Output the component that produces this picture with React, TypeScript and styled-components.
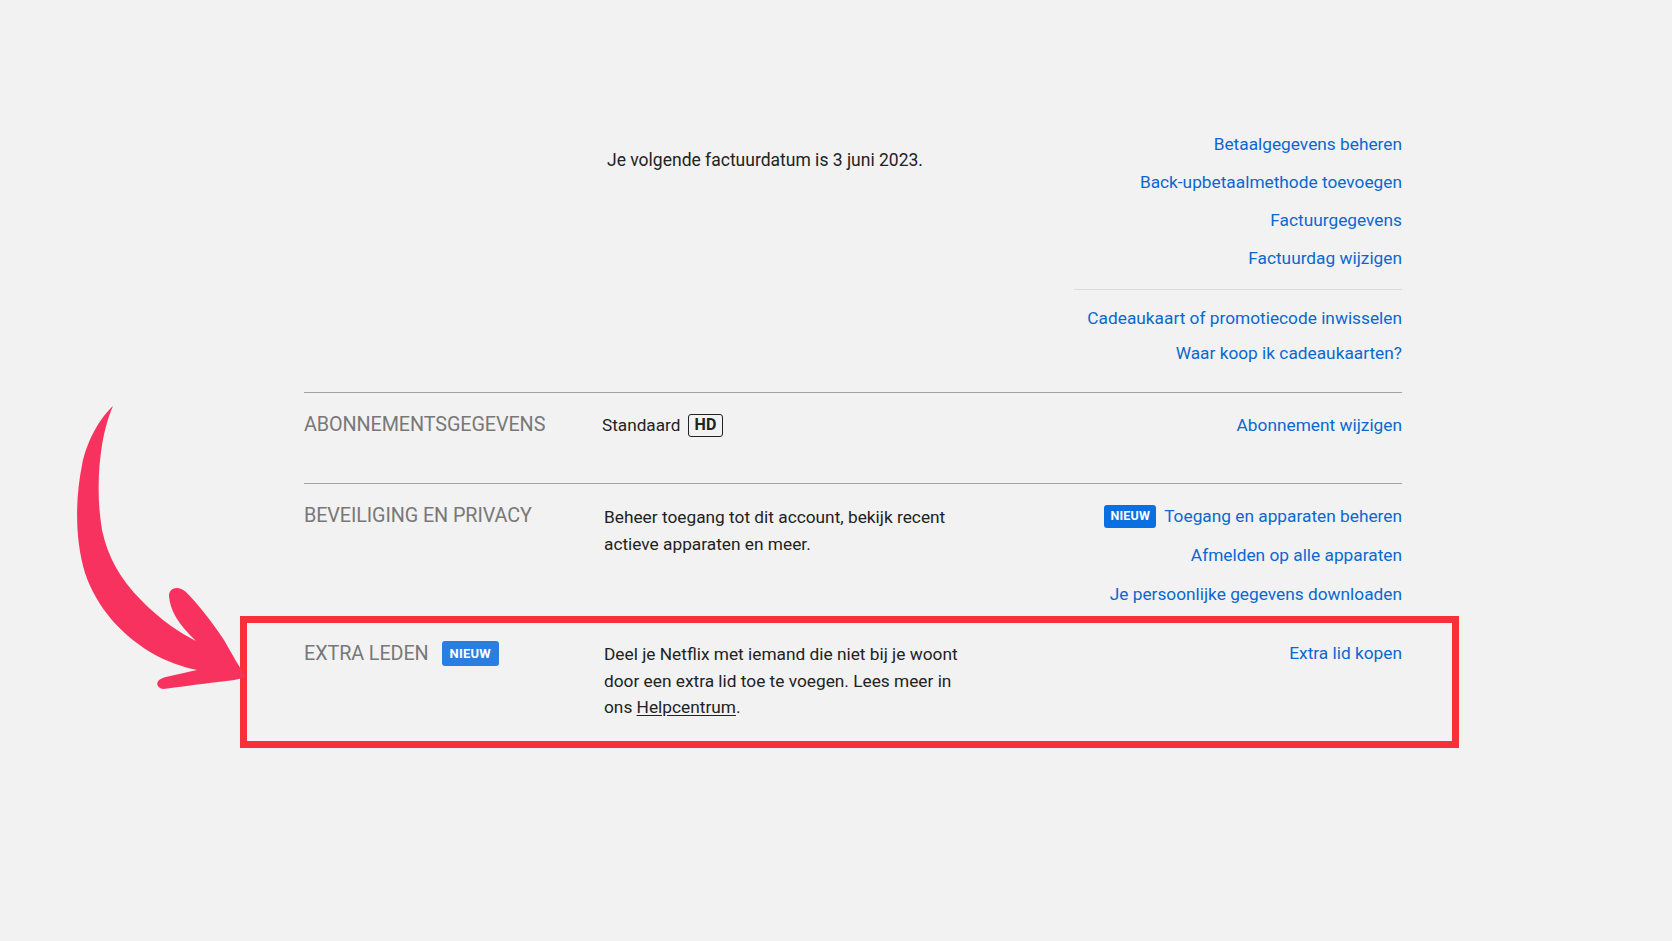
import React from 'react';
import styled, { createGlobalStyle } from 'styled-components';

const GlobalStyle = createGlobalStyle`
    html, body {
        margin: 0;
        padding: 0;
        background: #f2f2f2;
    }
    body {
        font-family: Roboto, "Liberation Sans", Arial, sans-serif;
        color: #222;
    }
`

const Page = styled.div`
    position: relative;
    width: 1672px;
    height: 941px;
    overflow: hidden;
    background: #f2f2f2;
`

const Content = styled.main`
    width: 1098px;
    margin-left: 304px;
    padding-top: 112px;
`

interface RowProps {
    $pb: number;
    $border?: boolean;
}

const Row = styled.section<RowProps>`
    position: relative;
    display: grid;
    grid-template-columns: 298px 1fr 328px;
    align-items: start;
    padding: 20px 0 ${({$pb}) => $pb}px;
    border-bottom: ${({$border}) => $border ? '1px solid #a3a3a3' : 'none'};
`

const Highlighted = styled(Row)`
    padding-top: 21px;

    &::after {
        content: '';
        position: absolute;
        top: -4px;
        left: -64px;
        right: -57px;
        height: 132px;
        box-sizing: border-box;
        border: 7px solid #f8303a;
        pointer-events: none;
    }
`

const Label = styled.h2`
    margin: 0;
    display: flex;
    align-items: center;
    gap: 13px;
    font-size: 19.8px;
    font-weight: 400;
    line-height: 24px;
    color: #787878;
    text-transform: uppercase;
    letter-spacing: -0.1px;
`

const Middle = styled.div<{ $pt?: number; $pl?: number }>`
    padding: ${({$pt}) => $pt || 0}px 0 0 ${({$pl}) => $pl || 0}px;
    font-size: 17.5px;
    line-height: 24px;
    color: #222;
`

const Description = styled.p`
    margin: 0 0 0 2px;
    max-width: 365px;
    font-size: 17.3px;
    line-height: 26.5px;
    color: #222;
`

const HelpLink = styled.a`
    color: #222;
    text-decoration: underline;
    text-underline-offset: 2px;
`

const Plan = styled.div`
    display: flex;
    align-items: center;
    gap: 8px;
    font-size: 17.2px;
    line-height: 24px;
`

const HdBadge = styled.span`
    display: inline-flex;
    align-items: center;
    justify-content: center;
    box-sizing: border-box;
    height: 23px;
    padding: 0 5px;
    border: 1.5px solid #222;
    border-radius: 3px;
    font-size: 16px;
    font-weight: 700;
    letter-spacing: 0.3px;
`

const Links = styled.div`
    display: flex;
    flex-direction: column;
    align-items: flex-end;
`

const LinkGroup = styled.div<{ $gap: number }>`
    display: flex;
    flex-direction: column;
    align-items: flex-end;
    gap: ${({$gap}) => $gap}px;
`

const Divider = styled.hr`
    align-self: stretch;
    margin: 19px 0 16px;
    border: none;
    border-top: 1px solid #dcdcdc;
`

const ActionLink = styled.a`
    display: flex;
    align-items: center;
    gap: 8px;
    font-size: 17.3px;
    line-height: 24px;
    color: #0b68d0;
    text-decoration: none;
    white-space: nowrap;
`

const NewBadge = styled.span<{ $large?: boolean }>`
    display: inline-flex;
    align-items: center;
    height: ${({$large}) => $large ? 25 : 23}px;
    padding: 0 ${({$large}) => $large ? 8 : 6}px;
    border-radius: 3px;
    background: ${({$large}) => $large ? '#2a7ee2' : '#0a6fe0'};
    color: #fff;
    font-size: ${({$large}) => $large ? 13 : 12.5}px;
    font-weight: 700;
    letter-spacing: 0.2px;
`

const Arrow = styled.svg`
    position: absolute;
    left: 50px;
    top: 390px;
    width: 220px;
    height: 320px;
    pointer-events: none;
`

const App = () => {
    return (
        <Page>
            <GlobalStyle />
            <Content>
                <Row $pb={27} $border>
                    <div />
                    <Middle $pt={16} $pl={5}>Je volgende factuurdatum is 3 juni 2023.</Middle>
                    <Links>
                        <LinkGroup $gap={14}>
                            <ActionLink href="#">Betaalgegevens beheren</ActionLink>
                            <ActionLink href="#">Back-upbetaalmethode toevoegen</ActionLink>
                            <ActionLink href="#">Factuurgegevens</ActionLink>
                            <ActionLink href="#">Factuurdag wijzigen</ActionLink>
                        </LinkGroup>
                        <Divider />
                        <LinkGroup $gap={11}>
                            <ActionLink href="#">Cadeaukaart of promotiecode inwisselen</ActionLink>
                            <ActionLink href="#">Waar koop ik cadeaukaarten?</ActionLink>
                        </LinkGroup>
                    </Links>
                </Row>

                <Row $pb={46} $border>
                    <Label>Abonnementsgegevens</Label>
                    <Plan>
                        Standaard <HdBadge>HD</HdBadge>
                    </Plan>
                    <Links>
                        <ActionLink href="#">Abonnement wijzigen</ActionLink>
                    </Links>
                </Row>

                <Row $pb={14}>
                    <Label>Beveiliging en privacy</Label>
                    <Description>
                        Beheer toegang tot dit account, bekijk recent actieve apparaten en meer.
                    </Description>
                    <Links>
                        <LinkGroup $gap={15}>
                            <ActionLink href="#">
                                <NewBadge>NIEUW</NewBadge>
                                Toegang en apparaten beheren
                            </ActionLink>
                            <ActionLink href="#">Afmelden op alle apparaten</ActionLink>
                            <ActionLink href="#">Je persoonlijke gegevens downloaden</ActionLink>
                        </LinkGroup>
                    </Links>
                </Row>

                <Highlighted $pb={30}>
                    <Label>
                        Extra leden <NewBadge $large>NIEUW</NewBadge>
                    </Label>
                    <Description>
                        Deel je Netflix met iemand die niet bij je woont door een extra lid toe te voegen.
                        Lees meer in ons <HelpLink href="#">Helpcentrum</HelpLink>.
                    </Description>
                    <Links>
                        <ActionLink href="#">Extra lid kopen</ActionLink>
                    </Links>
                </Highlighted>
            </Content>

            <Arrow viewBox="50 390 220 320">
                <path
                    fill="#f7325f"
                    d="M113,406
                       C100,418 87,440 82,465
                       C75,500 75,540 85,573
                       C97,608 121,634 150,652
                       C165,661 182,667 197,670
                       C188,672 178,674 166,677
                       C156,679 154,687 163,689
                       C180,687 200,684 218,682
                       C230,681 240,679 246,677
                       C240,668 233,656 224,640
                       C212,622 198,604 186,592
                       C178,585 169,588 169,596
                       C170,610 178,624 196,641
                       C182,634 160,620 141,600
                       C121,580 108,558 102,530
                       C97,500 98,470 102,445
                       C105,428 109,415 113,406 Z"
                />
            </Arrow>
        </Page>
    );
};

export default App;
